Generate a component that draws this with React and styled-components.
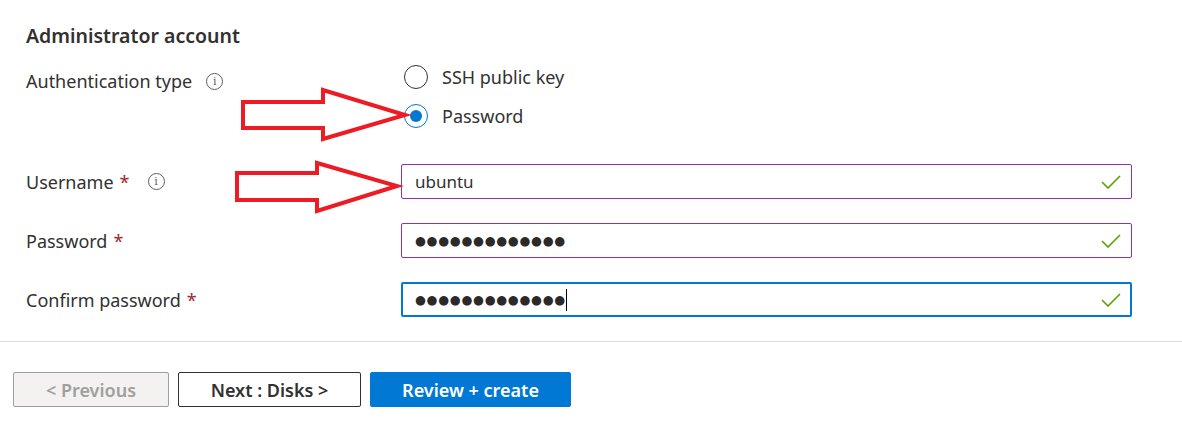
import React from "react";
import styled, { createGlobalStyle } from "styled-components";

const Global = createGlobalStyle`
  html, body { margin: 0; padding: 0; background: #ffffff; }
  body { font-family: "Noto Sans", "Open Sans", sans-serif; color: #323130; }
`;

const Page = styled.div`
  position: relative;
  width: 1182px;
  height: 429px;
  padding-top: 24px;
  box-sizing: border-box;
  overflow: hidden;
`;

const Section = styled.section`
  padding: 0 50px 0 26px;
`;

const Heading = styled.h2`
  margin: 0;
  font-size: 19.5px;
  line-height: 24px;
  font-weight: 600;
  color: #323130;
`;

const Row = styled.div`
  display: grid;
  grid-template-columns: 375px 1fr;
  align-items: ${(p) => (p.$top ? "start" : "center")};
  margin-top: ${(p) => p.$mt || 0}px;
`;

const Label = styled.div`
  display: flex;
  align-items: center;
  font-size: 18px;
  line-height: 28px;
  padding-top: ${(p) => p.$pt || 0}px;
  color: #323130;
`;

const Required = styled.span`
  color: #a4262c;
  margin-left: 6px;
`;

const Info = styled.span`
  display: inline-flex;
  align-items: center;
  justify-content: center;
  width: 17px;
  height: 17px;
  border: 1px solid #605e5c;
  border-radius: 50%;
  box-sizing: border-box;
  color: #605e5c;
  font-size: 11px;
  line-height: 1;
  margin-left: ${(p) => p.$ml || 14}px;
  font-family: "DejaVu Serif", serif;
`;

const RadioGroup = styled.div`
  display: flex;
  flex-direction: column;
  gap: 11px;
`;

const Option = styled.label`
  display: flex;
  align-items: center;
  gap: 14px;
  height: 28px;
  font-size: 18px;
  color: #323130;
  margin-left: 3px;
`;

const Circle = styled.span`
  width: 24px;
  height: 24px;
  border-radius: 50%;
  box-sizing: border-box;
  border: 1px solid ${(p) => (p.$on ? "#0078d4" : "#323130")};
  display: flex;
  align-items: center;
  justify-content: center;
  &::after {
    content: "";
    width: 12px;
    height: 12px;
    border-radius: 50%;
    background: ${(p) => (p.$on ? "#0078d4" : "transparent")};
  }
`;

const Field = styled.div`
  position: relative;
  height: 35px;
  box-sizing: border-box;
  border: ${(p) => (p.$focus ? "2px solid #0078d4" : "1px solid #8a34a6")};
  border-radius: 2px;
  display: flex;
  align-items: center;
  padding-left: ${(p) => (p.$focus ? 12 : 13)}px;
  padding-right: ${(p) => (p.$focus ? 9 : 10)}px;
  font-size: 17px;
  color: #323130;
`;

const Value = styled.span`
  flex: 1;
  display: flex;
  align-items: center;
`;

const Dots = styled.span`
  font-family: "DejaVu Sans", sans-serif;
  font-size: 12.5px;
  letter-spacing: 0.7px;
  color: #2b2a29;
`;

const Caret = styled.span`
  display: inline-block;
  width: 1px;
  height: 22px;
  background: #000;
`;

const Divider = styled.hr`
  margin: 24px 0 0;
  border: 0;
  border-top: 1px solid #e1dfdd;
`;

const Footer = styled.div`
  display: flex;
  gap: 9px;
  padding: 30px 0 0 13px;
`;

const Button = styled.button`
  height: 35px;
  width: ${(p) => p.$w}px;
  box-sizing: border-box;
  border-radius: 2px;
  font-family: "Noto Sans", sans-serif;
  font-size: 18px;
  font-weight: 600;
  padding: 0;
  border: 1px solid
    ${(p) => (p.$kind === "primary" ? "#0078d4" : p.$kind === "disabled" ? "#a19f9d" : "#323130")};
  background: ${(p) => (p.$kind === "primary" ? "#0078d4" : p.$kind === "disabled" ? "#f3f2f1" : "#ffffff")};
  color: ${(p) => (p.$kind === "primary" ? "#ffffff" : p.$kind === "disabled" ? "#a19f9d" : "#323130")};
`;

const Overlay = styled.svg`
  position: absolute;
  left: 0;
  top: 0;
  pointer-events: none;
`;

const Check = () => (
  <svg width="20" height="14" viewBox="0 0 20 14">
    <polyline points="1,7 7,13 19,1" fill="none" stroke="#57a300" strokeWidth="1.6" />
  </svg>
);

export default function App() {
  return (
    <>
      <Global />
      <Page>
        <Section>
          <Heading>Administrator account</Heading>
          <Row $top $mt={15}>
            <Label $pt={4}>
              Authentication type<Info $ml={14}>i</Info>
            </Label>
            <RadioGroup>
              <Option>
                <Circle />
                SSH public key
              </Option>
              <Option>
                <Circle $on />
                Password
              </Option>
            </RadioGroup>
          </Row>
          <Row $mt={34}>
            <Label>
              Username<Required>*</Required>
              <Info $ml={18}>i</Info>
            </Label>
            <Field>
              <Value>ubuntu</Value>
              <Check />
            </Field>
          </Row>
          <Row $mt={24}>
            <Label>
              Password<Required>*</Required>
            </Label>
            <Field>
              <Value>
                <Dots>●●●●●●●●●●●●●</Dots>
              </Value>
              <Check />
            </Field>
          </Row>
          <Row $mt={24}>
            <Label>
              Confirm password<Required>*</Required>
            </Label>
            <Field $focus>
              <Value>
                <Dots>●●●●●●●●●●●●●</Dots>
                <Caret />
              </Value>
              <Check />
            </Field>
          </Row>
        </Section>
        <Divider />
        <Footer>
          <Button $kind="disabled" $w={156}>&lt; Previous</Button>
          <Button $w={183}>Next : Disks &gt;</Button>
          <Button $kind="primary" $w={201}>Review + create</Button>
        </Footer>
        <Overlay width="1182" height="429">
          <polygon
            points="243,102 323,102 323,90 405,115 323,139 323,128 243,128"
            fill="none"
            stroke="#ed1c24"
            strokeWidth="4"
            strokeLinejoin="miter"
          />
          <polygon
            points="237,173 317,173 317,163 397,186 317,211 317,200 237,200"
            fill="none"
            stroke="#ed1c24"
            strokeWidth="4"
            strokeLinejoin="miter"
          />
        </Overlay>
      </Page>
    </>
  );
}
